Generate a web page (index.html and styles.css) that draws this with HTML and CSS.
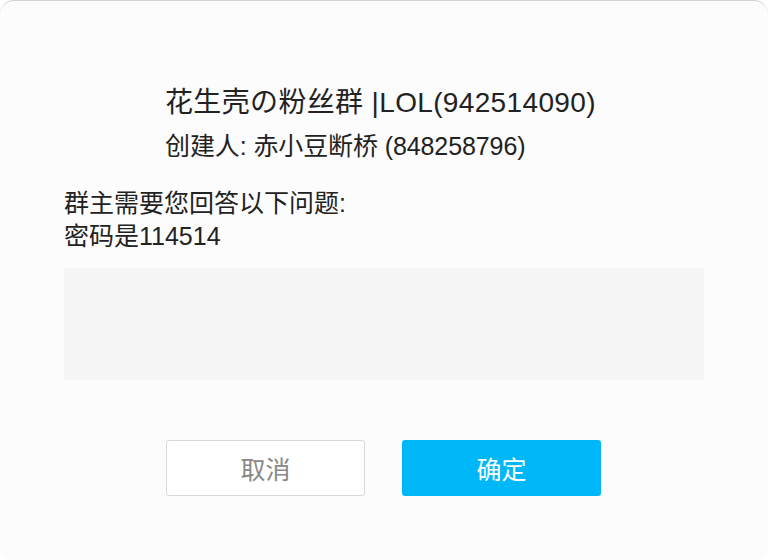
FILE: index.html
```html
<!DOCTYPE html>
<html lang="zh-CN">
<head>
<meta charset="utf-8">
<title>加群验证</title>
<link rel="stylesheet" href="styles.css">
</head>
<body>
<div class="panel">
  <div class="header">
    <div class="title">花生壳の粉丝群 |LOL(942514090)</div>
    <div class="creator">创建人: 赤小豆断桥 (848258796)</div>
  </div>
  <div class="question">
    <div>群主需要您回答以下问题:</div>
    <div>密码是114514</div>
  </div>
  <div class="answer"></div>
  <div class="actions">
    <button class="btn btn-cancel">取消</button>
    <button class="btn btn-ok">确定</button>
  </div>
</div>
</body>
</html>
```
FILE: styles.css
```css
html, body {
  margin: 0;
  padding: 0;
  background: #ffffff;
}
body {
  font-family: "Liberation Sans", "Noto Sans CJK SC", sans-serif;
  color: #222222;
}
.panel {
  box-sizing: border-box;
  height: 560px;
  background: #fcfcfc;
  border-top: 1px solid #d2d2d2;
  border-radius: 14px;
  padding: 85px 64px 0 63px;
}
.header {
  padding-left: 102px;
}
.title {
  font-size: 28px;
  line-height: 34px;
  letter-spacing: 0.35px;
}
.creator {
  font-size: 25px;
  line-height: 30px;
  margin-top: 11px;
  letter-spacing: -0.1px;
}
.question {
  margin-top: 26px;
  padding-left: 1px;
  font-size: 25px;
  line-height: 33px;
}
.answer {
  margin: 15px 0 0 1px;
  height: 112px;
  background: #f5f5f5;
}
.actions {
  display: flex;
  justify-content: center;
  gap: 37px;
  margin-top: 60px;
}
.btn {
  box-sizing: border-box;
  width: 199px;
  height: 56px;
  border-radius: 3px;
  font-family: "Liberation Sans", "Noto Sans CJK SC", sans-serif;
  font-size: 25px;
  cursor: pointer;
}
.btn-cancel {
  background: #ffffff;
  border: 1px solid #d9d9d9;
  color: #888888;
}
.btn-ok {
  background: #00b8f7;
  border: none;
  color: #ffffff;
}
```
